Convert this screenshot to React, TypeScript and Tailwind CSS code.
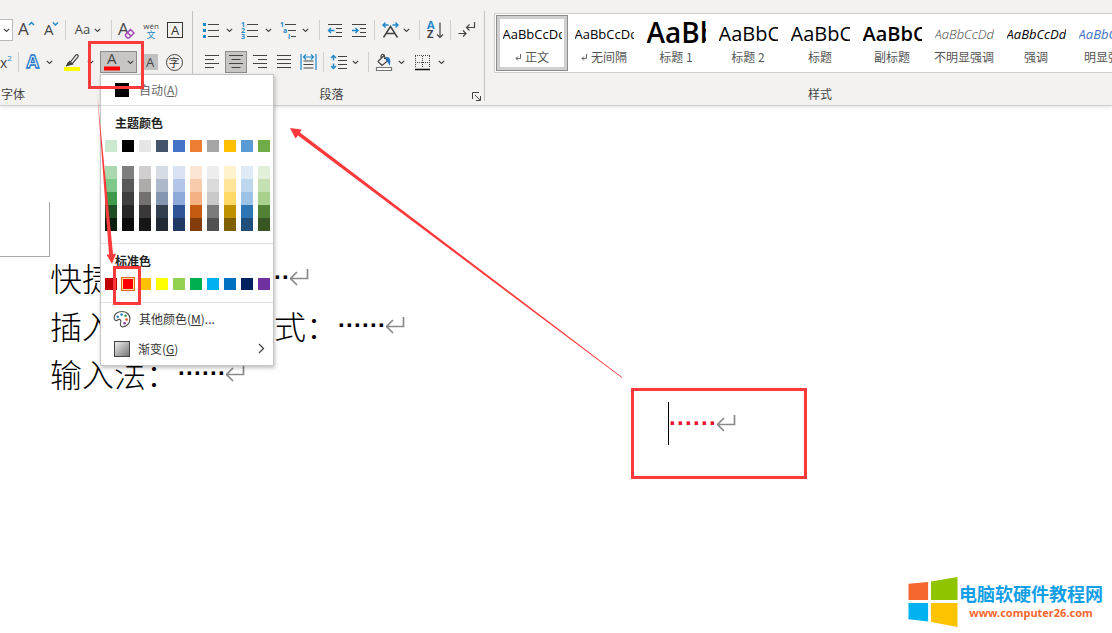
import React from "react";

const themeColors = [
  { base: "bg-[#cce8cf]", shades: ["bg-[#aad9af]", "bg-[#7ec98a]", "bg-[#3f9a4c]", "bg-[#1e4d26]", "bg-[#0c1f0f]"] },
  { base: "bg-black", shades: ["bg-[#7f7f7f]", "bg-[#595959]", "bg-[#3f3f3f]", "bg-[#262626]", "bg-[#0c0c0c]"] },
  { base: "bg-[#e7e6e6]", shades: ["bg-[#d0cece]", "bg-[#aeabab]", "bg-[#757070]", "bg-[#3a3838]", "bg-[#171616]"] },
  { base: "bg-[#44546a]", shades: ["bg-[#d6dce4]", "bg-[#adb9ca]", "bg-[#8496b0]", "bg-[#323f4f]", "bg-[#222a35]"] },
  { base: "bg-[#4472c4]", shades: ["bg-[#d9e2f3]", "bg-[#b4c6e7]", "bg-[#8eaadb]", "bg-[#2f5496]", "bg-[#1f3864]"] },
  { base: "bg-[#ed7d31]", shades: ["bg-[#fbe5d5]", "bg-[#f7cbac]", "bg-[#f4b183]", "bg-[#c55a11]", "bg-[#833c0b]"] },
  { base: "bg-[#a5a5a5]", shades: ["bg-[#ededed]", "bg-[#dbdbdb]", "bg-[#c9c9c9]", "bg-[#7b7b7b]", "bg-[#525252]"] },
  { base: "bg-[#ffc000]", shades: ["bg-[#fff2cc]", "bg-[#fee599]", "bg-[#ffd965]", "bg-[#bf9000]", "bg-[#7f6000]"] },
  { base: "bg-[#5b9bd5]", shades: ["bg-[#deebf6]", "bg-[#bdd7ee]", "bg-[#9cc3e5]", "bg-[#2e75b5]", "bg-[#1e4e79]"] },
  { base: "bg-[#70ad47]", shades: ["bg-[#e2efd9]", "bg-[#c5e0b3]", "bg-[#a8d08d]", "bg-[#538135]", "bg-[#375623]"] },
];

const standardColors = [
  "bg-[#c00000]",
  "bg-[#ff0000] outline outline-[#e8671b] ring-1 ring-inset ring-[#ffe294]",
  "bg-[#ffc000]",
  "bg-[#ffff00]",
  "bg-[#92d050]",
  "bg-[#00b050]",
  "bg-[#00b0f0]",
  "bg-[#0070c0]",
  "bg-[#002060]",
  "bg-[#7030a0]",
];

const styleItems = [
  { sample: "AaBbCcDd", name: "正文", look: "text-[13px] leading-9 text-black", mark: true, selected: true },
  { sample: "AaBbCcDd", name: "无间隔", look: "text-[13px] leading-9 text-black", mark: true },
  { sample: "AaBb", name: "标题 1", look: "text-[28px] leading-8 font-semibold text-black" },
  { sample: "AaBbC", name: "标题 2", look: "text-[20px] leading-9 text-black" },
  { sample: "AaBbC", name: "标题", look: "text-[20px] leading-9 text-black" },
  { sample: "AaBbC", name: "副标题", look: "text-[20px] leading-9 font-semibold text-black" },
  { sample: "AaBbCcDd", name: "不明显强调", look: "text-[13px] leading-9 font-light italic text-[#404040]" },
  { sample: "AaBbCcDd", name: "强调", look: "text-[13px] leading-9 italic text-black" },
  { sample: "AaBbCcDd", name: "明显强调", look: "text-[13px] leading-9 italic text-[#4472c4]" },
];

function Chevron() {
  return (
    <svg width="7" height="5" viewBox="0 0 7 5" fill="none" stroke="#444" strokeWidth="1.2">
      <path d="M0.8 0.8 3.5 3.5 6.2 0.8" />
    </svg>
  );
}

function Divider({ className = "" }: { className?: string }) {
  return <span className={`h-5 w-px shrink-0 bg-[#d0cfce] ${className}`} />;
}

interface ToolProps {
  label: string;
  className?: string;
  children: React.ReactNode;
}

function Tool({ label, className = "w-6", children }: ToolProps) {
  return (
    <button
      aria-label={label}
      className={`flex h-[22px] shrink-0 items-center justify-center ${className}`}
    >
      {children}
    </button>
  );
}

// 17x18 drawing area shared by the ribbon icons
function Icon({ children }: { children: React.ReactNode }) {
  return (
    <svg
      width="17"
      height="18"
      viewBox="0 0 17 18"
      fill="none"
      stroke="#444"
      strokeWidth="1.2"
      className="shrink-0 overflow-visible font-['Open_Sans',sans-serif]"
    >
      {children}
    </svg>
  );
}

function ReturnMark() {
  return (
    <svg width="19" height="18" viewBox="1 0 19 18" fill="none" stroke="#8a8a8a" strokeWidth="1.7">
      <path d="M18.5 1v9.5H2M8 4 1.5 10.5 8 17" />
    </svg>
  );
}

function Dots({ count, className = "" }: { count: number; className?: string }) {
  return (
    <span className={`font-['Liberation_Sans',sans-serif] text-2xl leading-[48px] font-bold ${className}`}>
      {"·".repeat(count)}
    </span>
  );
}

function ColorMenu() {
  return (
    <div
      role="menu"
      className="absolute top-[23px] left-0 z-20 w-[174px] border border-[#c6c6c6] bg-white text-xs text-[#333] shadow-[1px_2px_4px_rgba(0,0,0,0.25)]"
    >
      <button className="flex h-[31px] w-full items-center gap-2.5 border-b border-[#e1e1e1] pl-3.5 text-[#666]">
        <span className="size-3.5 bg-black" />
        <span>
          自动(<u>A</u>)
        </span>
      </button>
      <h3 className="h-[34px] pl-3.5 leading-[34px] font-bold text-[#222]">主题颜色</h3>
      <div className="flex gap-[5px] pl-1">
        {themeColors.map((color) => (
          <div key={color.base} className="flex flex-col">
            <button aria-label="主题颜色" className={`mb-3.5 size-3 ${color.base}`} />
            {color.shades.map((shade) => (
              <button key={shade} aria-label="主题颜色" className={`h-[13px] w-3 ${shade}`} />
            ))}
          </div>
        ))}
      </div>
      <div className="mt-3 h-px bg-[#e1e1e1]" />
      <h3 className="h-[34px] pl-3.5 leading-[34px] font-bold text-[#222]">标准色</h3>
      <div className="flex gap-[5px] border-b border-[#e1e1e1] pb-3 pl-1">
        {standardColors.map((color) => (
          <button key={color} aria-label="标准色" className={`size-3 ${color}`} />
        ))}
      </div>
      <button className="flex h-[31px] w-full items-center gap-2 pl-3">
        <svg width="18" height="18" viewBox="0 0 18 18" fill="none" stroke="#555" strokeWidth="1.2">
          <path d="M9 1.5C4.5 1.5 1.2 4 1.2 7.6c0 2.2 1.3 3.4 2.7 2.8 1.3-.6 2.3-1.5 3.4-.7 1.2 1 .2 2.5.1 4.3-.1 1.7.9 2.8 2.5 2.8 4 0 7-3.6 7-8 0-4.300-3.400-7.300-7.900-7.300Z" />
          <g stroke="none">
            <circle cx="4.7" cy="6.7" r="1.3" fill="#2b88c8" />
            <circle cx="8.6" cy="4.6" r="1.3" fill="#2b88c8" />
            <circle cx="12.6" cy="5.8" r="1.3" fill="#3f9a4c" />
            <circle cx="13.6" cy="9.6" r="1.3" fill="#e0592a" />
            <circle cx="11.6" cy="13.2" r="1.3" fill="#8a3fa0" />
          </g>
        </svg>
        <span>
          其他颜色(<u>M</u>)...
        </span>
      </button>
      <button className="flex h-[31px] w-full items-center pr-2 pb-0.5 pl-[13px]">
        <span className="size-4 border border-[#444] bg-linear-to-br from-[#f0f0f0] to-[#777]" />
        <span className="ml-2 flex-1 text-left">
          渐变(<u>G</u>)
        </span>
        <svg width="7" height="11" viewBox="0 0 7 11" fill="none" stroke="#444" strokeWidth="1.3">
          <path d="M1 1l4.5 4.5L1 10" />
        </svg>
      </button>
    </div>
  );
}

function FontGroup() {
  return (
    <section className="mt-[11px] flex h-[90px] w-[193px] shrink-0 flex-col border-r border-[#c3c2c1] pt-[8px]">
      <div className="flex h-[22px] items-center">
        <Tool label="字号" className="w-[13px] border border-l-0 border-[#bbb] bg-white">
          <Chevron />
        </Tool>
        <Tool label="增大字号" className="w-[26px]">
          <Icon>
            <text x="0" y="14" fontSize="17" fill="#444" stroke="none">A</text>
            <path d="M11 4l2.500-2.500L16 4" stroke="#1e88c9" strokeWidth="1.5" />
          </Icon>
        </Tool>
        <Tool label="减小字号" className="w-[25px]">
          <Icon>
            <text x="1" y="14" fontSize="15" fill="#444" stroke="none">A</text>
            <path d="M10 1.5L12.5 4 15 1.5" stroke="#1e88c9" strokeWidth="1.5" />
          </Icon>
        </Tool>
        <Divider className="mx-px" />
        <Tool label="更改大小写" className="w-[42px] gap-1 font-['Open_Sans',sans-serif] text-[13px] text-[#444]">
          Aa
          <Chevron />
        </Tool>
        <Divider className="mr-[3px] ml-0.5" />
        <Tool label="清除所有格式">
          <Icon>
            <text x="-1" y="14" fontSize="17" fill="#444" stroke="none">A</text>
            <path d="M6.500 13.500l5-5 3.500 3.500-5 5H8.500l-2-2z" fill="#f3f2f1" stroke="#a347b5" strokeWidth="1.5" />
            <path d="M8.300 11.500l3.500 3.500" stroke="#a347b5" strokeWidth="1.5" />
          </Icon>
        </Tool>
        <Tool label="拼音指南">
          <span className="flex flex-col items-center">
            <span className="font-['Open_Sans',sans-serif] text-[8px] leading-[9px] text-[#444]">wén</span>
            <span className="text-[9px] leading-[10px] text-[#1e88c9]">文</span>
          </span>
        </Tool>
        <Tool label="字符边框">
          <span className="flex size-4 items-center justify-center border border-[#333] font-['Open_Sans',sans-serif] text-[13px] leading-3 text-[#333]">
            A
          </span>
        </Tool>
      </div>
      <div className="mt-[10px] flex h-[22px] items-center">
        <Tool label="上标" className="w-[18px] justify-start! font-['Open_Sans',sans-serif] text-[14px] text-[#444]">
          x<sup className="text-[8px] text-[#1e88c9]">2</sup>
        </Tool>
        <Divider />
        <Tool label="文本效果" className="w-10 gap-1">
          <Icon>
            <text x="1.5" y="15" fontSize="18" fontWeight="700" fill="#fff" stroke="#1e78c8" strokeWidth="1.3">A</text>
          </Icon>
          <Chevron />
        </Tool>
        <Tool label="突出显示" className="w-[41px] justify-start! gap-1.5 pl-[5px]">
          <Icon>
            <path d="M6 9.500l6-7.500c1-1 3 .5 2 1.800l-6 7.200-2.500.5-2.500 1 1-2.500z" />
            <path d="M3 12.500l2.500-4 3 2.500z" fill="#444" />
            <path d="M0 14h16v4H0z" fill="#ff0" stroke="none" />
          </Icon>
          <Chevron />
        </Tool>
        <div className="relative shrink-0">
          <Tool label="字体颜色" className="w-[37px] gap-1.5 border border-[#8c8c8c] bg-[#c8c6c4]">
            <Icon>
              <text x="3" y="11" fontSize="15" fill="#444" stroke="none">A</text>
              <path d="M0 13.500h16v4H0z" fill="#f00" stroke="none" />
            </Icon>
            <Chevron />
          </Tool>
          <ColorMenu />
        </div>
        <Tool label="字符底纹" className="w-[26px]">
          <span className="size-4 bg-[#c0c0c0] font-['Open_Sans',sans-serif] text-[13px] leading-4 text-[#444]">A</span>
        </Tool>
        <Tool label="带圈字符" className="w-[22px]">
          <span className="flex size-[17px] shrink-0 items-center justify-center rounded-full border border-[#444] text-[11px] leading-3 text-[#333]">
            字
          </span>
        </Tool>
      </div>
      <h2 className="mt-[13px] pl-px text-xs leading-4 text-[#444]">字体</h2>
    </section>
  );
}

function ParagraphGroup() {
  return (
    <section className="mt-[11px] flex h-[90px] w-[292px] shrink-0 flex-col border-r border-[#c3c2c1] pt-[8px]">
      <div className="flex h-[22px] items-center pl-[5px]">
        <Tool label="项目符号" className="w-[39px] gap-[7px]">
          <Icon>
            <path d="M6 3.500h11M6 9.500h11M6 15.500h11" />
            <path d="M1 2h3v3H1zM1 8h3v3H1zM1 14h3v3H1z" fill="#1e88c9" stroke="none" />
          </Icon>
          <Chevron />
        </Tool>
        <Tool label="编号" className="w-[39px] gap-[7px]">
          <Icon>
            <path d="M6 3.500h11M6 9.500h11M6 15.500h11" />
            <g fill="#1e88c9" stroke="none" fontSize="7" fontWeight="700">
              <text x="0" y="6">1</text>
              <text x="0" y="12">2</text>
              <text x="0" y="18">3</text>
            </g>
          </Icon>
          <Chevron />
        </Tool>
        <Tool label="多级列表" className="w-[37px] gap-[5px]">
          <Icon>
            <path d="M5 3.500h11M8 9.500h8M11 15.500h5" />
            <g fill="#1e88c9" stroke="none" fontSize="7" fontWeight="700">
              <text x="0" y="6">1</text>
              <text x="3" y="12">a</text>
              <text x="8" y="18">i</text>
            </g>
          </Icon>
          <Chevron />
        </Tool>
        <Divider className="mr-[3px] ml-1.5" />
        <Tool label="减少缩进量">
          <Icon>
            <path d="M1 3.500h14M9 7.500h6M9 11.500h6M1 15.500h14" />
            <path d="M7.500 9.500H1.500M4 7 1.500 9.500 4 12" stroke="#1e88c9" strokeWidth="1.4" />
          </Icon>
        </Tool>
        <Tool label="增加缩进量">
          <Icon>
            <path d="M1 3.500h14M9 7.500h6M9 11.500h6M1 15.500h14" />
            <path d="M1 9.500h6M4.500 7 7 9.500 4.500 12" stroke="#1e88c9" strokeWidth="1.4" />
          </Icon>
        </Tool>
        <Divider className="ml-[3px]" />
        <Tool label="中文版式" className="w-[42px] gap-1">
          <Icon>
            <path d="M1.500 16.500 8.500 5.500l7 11M4 12.500h9" strokeWidth="1.5" />
            <path d="M6.500 4H1M3.500 1.500 1 4l2.500 2.500M10.500 4H16M13.500 1.500 16 4l-2.500 2.500" stroke="#1e88c9" strokeWidth="1.4" />
          </Icon>
          <Chevron />
        </Tool>
        <Divider className="mx-0.5" />
        <Tool label="排序" className="w-[26px]">
          <Icon>
            <g stroke="none" fontSize="11" fontWeight="700">
              <text x="0" y="8" fill="#1e88c9">A</text>
              <text x="0" y="17" fill="#444">Z</text>
            </g>
            <path d="M13 1.500v15M10 13.500l3 3 3-3" />
          </Icon>
        </Tool>
        <Divider className="mr-[3px] ml-0.5" />
        <Tool label="显示编辑标记">
          <Icon>
            <path d="M16.500 1v5.500H9M11.500 3.500l-3 3 3 3M.5 12.500h7M5 9.500l3 3-3 3" />
          </Icon>
        </Tool>
      </div>
      <div className="mt-[10px] flex h-[22px] items-center pl-[7px]">
        <Tool label="左对齐">
          <Icon>
            <path d="M1 2.500h14M1 6.500h9M1 10.500h14M1 14.500h9" />
          </Icon>
        </Tool>
        <Tool label="居中" className="mx-px w-[22px] border border-[#8c8c8c] bg-[#c8c6c4]">
          <Icon>
            <path d="M1 2.500h14M3.500 6.500h9M1 10.500h14M3.500 14.500h9" />
          </Icon>
        </Tool>
        <Tool label="右对齐">
          <Icon>
            <path d="M1 2.500h14M6 6.500h9M1 10.500h14M6 14.500h9" />
          </Icon>
        </Tool>
        <Tool label="两端对齐">
          <Icon>
            <path d="M1 2.500h14M1 6.500h14M1 10.500h14M1 14.500h14" />
          </Icon>
        </Tool>
        <Tool label="分散对齐">
          <Icon>
            <path d="M3.500 8h10M3.500 11.500h10M3.500 15h10" />
            <path d="M1 1v16M16 1v16M3.500 4h10M6 1.500 3.500 4 6 6.500M11 1.500 13.500 4 11 6.500" stroke="#1e88c9" />
          </Icon>
        </Tool>
        <Divider className="mr-0.5 ml-[3px]" />
        <Tool label="行距" className="w-[37px] gap-[5px]">
          <Icon>
            <path d="M8 3.500h9M8 7.500h9M8 11.500h9M8 15.500h9" />
            <path d="M3.500 2.500v5M1 5l2.500-2.500L6 5M3.500 10.500v5M1 13l2.500 2.500L6 13" stroke="#1e88c9" strokeWidth="1.4" />
          </Icon>
          <Chevron />
        </Tool>
        <Divider className="mr-0.5 ml-[5px]" />
        <Tool label="底纹" className="w-[38px] gap-1.5">
          <Icon>
            <path d="M3 8.500 8.500 3l4 5L7 12.500zM6 5.500V3.500c0-3 3.500-3 3.500 0V6" />
            <path d="M11.500 4.500c3.500 0 3.500 3 3 6.500l-2-3z" fill="#1e78c8" stroke="#1e78c8" />
            <path d="M1.500 14.500h15v3h-15z" fill="#fff" stroke="#777" />
          </Icon>
          <Chevron />
        </Tool>
        <Tool label="边框" className="w-10 gap-[7px]">
          <Icon>
            <path d="M1 2.500h15M1.500 3v12M15.500 3v12M8.500 3v12M1 9.500h15" strokeDasharray="1 1" strokeWidth="1" />
            <path d="M1 16.500h15" stroke="#111" strokeWidth="1.5" />
          </Icon>
          <Chevron />
        </Tool>
      </div>
      <div className="mt-[13px] flex items-center pr-[3px] text-xs leading-4 text-[#444]">
        <h2 className="flex-1 pr-0.5 text-center">段落</h2>
        <button aria-label="段落设置" className="pt-1">
          <svg width="9" height="9" viewBox="0 0 9 9" fill="none" stroke="#444">
            <path d="M.5 7V.5H7M3 3l5 5M8.500 4v4.500H4" />
          </svg>
        </button>
      </div>
    </section>
  );
}

function StylesGroup() {
  return (
    <section className="min-w-0 flex-1 overflow-hidden pt-[13px] pl-[9px]">
      <div className="flex h-[60px] w-max border border-[#d0cfce] bg-white p-px">
        {styleItems.map((item) => (
          <button
            key={item.name}
            className={`flex h-[56px] w-[72px] shrink-0 flex-col items-center ${
              item.selected ? "border border-[#8c8c8c] ring-3 ring-inset ring-[#d0d0d0]" : "border border-transparent"
            }`}
          >
            <span
              className={`block h-[33px] w-[59px] overflow-hidden text-left font-['Open_Sans',sans-serif] whitespace-nowrap ${item.look}`}
            >
              {item.sample}
            </span>
            <span className="flex items-center gap-1 text-xs leading-4 whitespace-nowrap text-[#555]">
              {item.mark && (
                <svg width="6" height="7" viewBox="0 0 6 7" fill="none" stroke="#666">
                  <path d="M5.500 0v4.500H1M3 2.500l-2 2 2 2" />
                </svg>
              )}
              {item.name}
            </span>
          </button>
        ))}
      </div>
      <h2 className="mt-[13px] pl-[34px] text-center text-xs leading-4 text-[#444]">样式</h2>
    </section>
  );
}

function Document() {
  return (
    <main className="text-[32px] leading-[48px] font-light text-black">
      <div className="mt-24 h-[55px] w-[50px] border-r border-b border-[#a6a6a6]" />
      <div className="-mt-1">
        <p className="flex h-12 items-center pl-[50px]">
          快捷
          <span className="w-40" />
          <Dots count={2} />
          <ReturnMark />
        </p>
        <p className="flex h-12 items-center pl-[50px]">
          插入
          <span className="w-40" />
          式：
          <Dots count={6} />
          <ReturnMark />
        </p>
        <p className="flex h-12 items-center pl-[50px]">
          输入法：
          <Dots count={6} />
          <ReturnMark />
        </p>
      </div>
      <p className="mt-0.5 flex h-12 items-center pl-[668px]">
        <span className="h-[43px] w-px shrink-0 bg-black" />
        <Dots count={6} className="text-[#e8112d]" />
        <ReturnMark />
      </p>
    </main>
  );
}

function Annotations() {
  return (
    <div className="pointer-events-none absolute inset-0 z-30 overflow-hidden">
      <div className="absolute top-[41px] left-[88px] h-12 w-[56px] border-3 border-[#fc3a3c]" />
      <div className="absolute top-[266px] left-[113px] h-[39px] w-7 border-3 border-[#fc3a3c]" />
      <div className="absolute top-[388px] left-[631px] h-[91px] w-44 border-3 border-[#fc3a3c]" />
      <svg width="640" height="400" viewBox="0 0 640 400" fill="#fc3a3c" className="absolute top-0 left-0">
        <path d="M97.500 97 109 254.500 106.500 254.500 112 264 116 253.500 113 254Z" />
        <path d="M290 128 301.500 129.500 300 132.500 622.500 377.500 622 378 298 135.500 295.500 138.500Z" />
      </svg>
    </div>
  );
}

function Watermark() {
  return (
    <div className="absolute right-[9px] bottom-[6px] flex items-center font-bold">
      <svg width="50" height="50" viewBox="0 0 50 51">
        <path d="M0 7 20 5v18.500H0z" fill="#f6672f" />
        <path d="M23 4.500 50 0v23.500H23z" fill="#8fc400" />
        <path d="M0 26.500h20v19L0 43z" fill="#00b3f0" />
        <path d="M23 26.500h27V51l-27-5z" fill="#fdc300" />
      </svg>
      <div className="flex flex-col items-center pl-px">
        <span className="text-[18px] leading-[22px] text-[#129fe6]">电脑软硬件教程网</span>
        <a href="#" className="font-['Noto_Sans',sans-serif] text-[11px] leading-[18px] text-[#f6672f]">
          www.computer26.com
        </a>
      </div>
    </div>
  );
}

export default function App() {
  return (
    <div className="relative min-h-screen bg-white font-['Noto_Sans_CJK_SC',sans-serif]">
      <header className="relative z-10 flex h-[106px] border-b border-[#cfcecd] bg-[#f3f2f1] shadow-[0_1px_4px_rgba(0,0,0,0.12)]">
        <FontGroup />
        <ParagraphGroup />
        <StylesGroup />
      </header>
      <Document />
      <Annotations />
      <Watermark />
    </div>
  );
}
